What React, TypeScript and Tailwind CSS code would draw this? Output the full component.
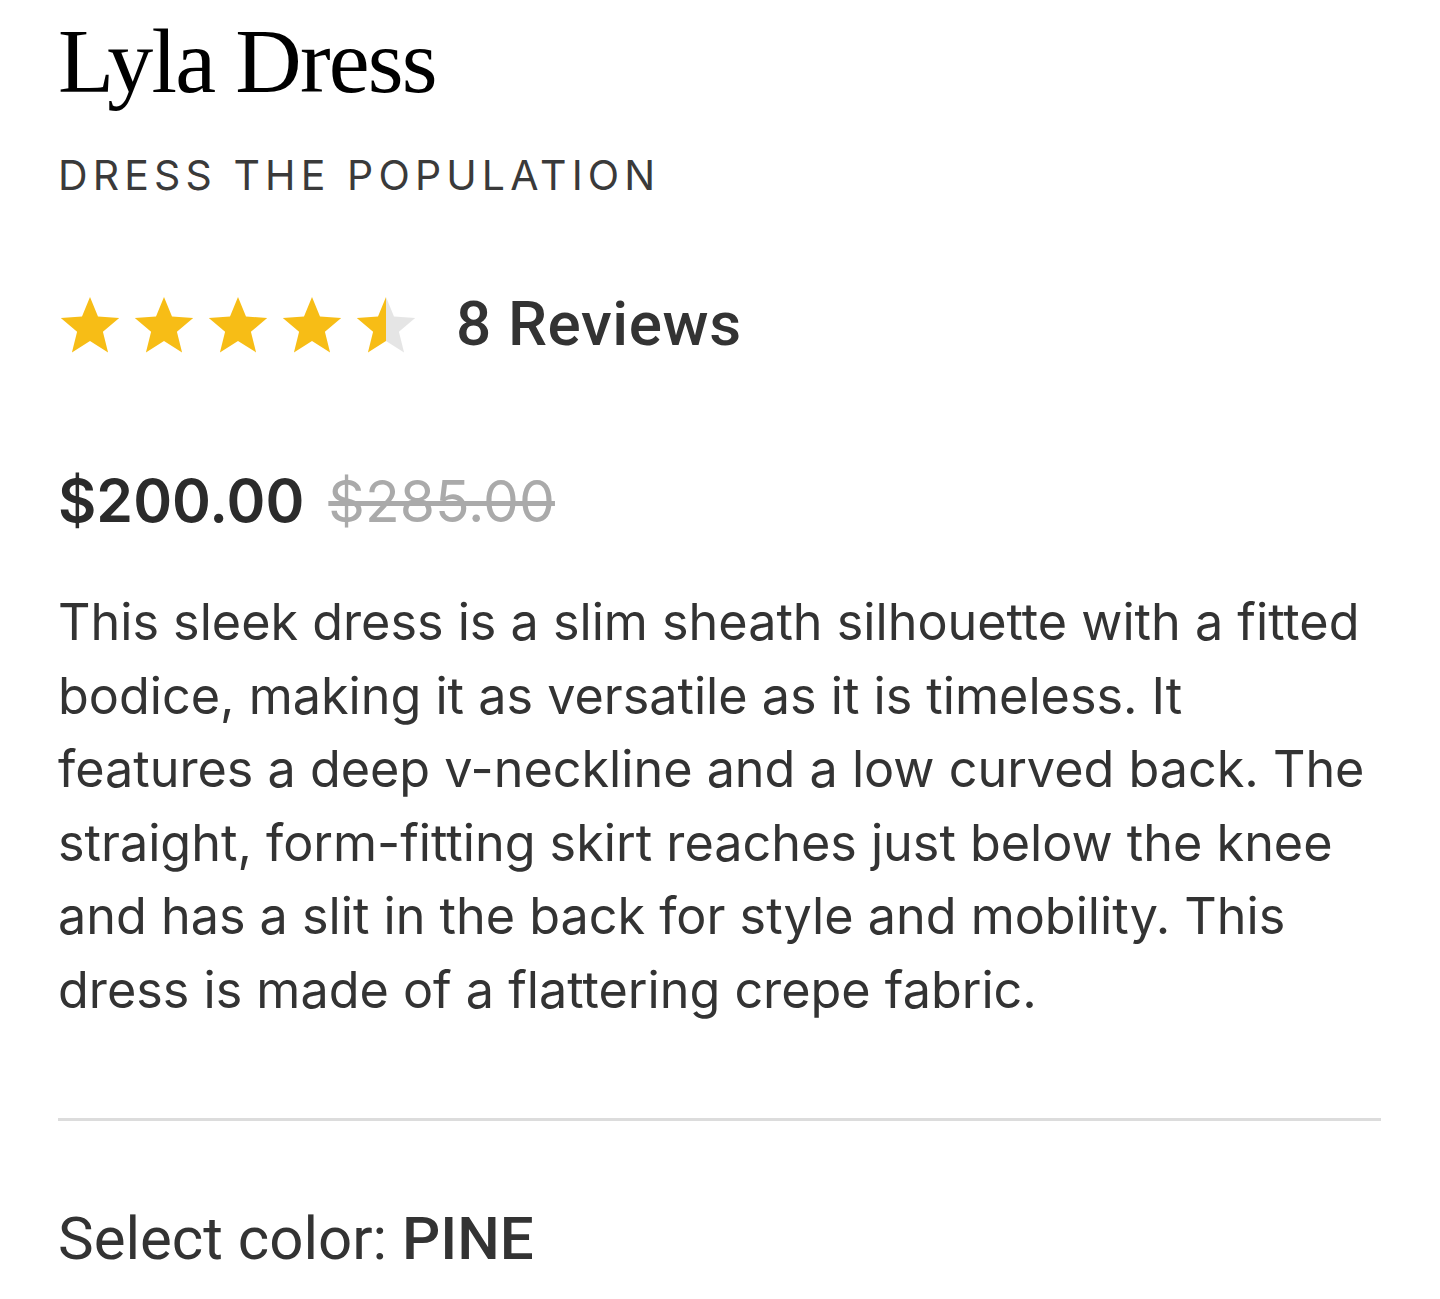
import React from 'react';

const Star: React.FC<{ fill: number }> = ({ fill }) => {
  const id = `half-${fill}`;
  return (
    <svg className="w-[64px] h-[62px]" viewBox="0 0 24 24">
      <defs>
        <linearGradient id={id} x1="0" x2="1" y1="0" y2="0">
          <stop offset={`${fill * 100}%`} stopColor="#f7bd16" />
          <stop offset={`${fill * 100}%`} stopColor="#e5e5e5" />
        </linearGradient>
      </defs>
      <path
        d="M12 1.5l3.1 7.6 8.2.6-6.3 5.3 2 8-7-4.4-7 4.4 2-8L.7 9.7l8.2-.6z"
        fill={`url(#${id})`}
      />
    </svg>
  );
};

const App: React.FC = () => {
  return (
    <div className="min-h-[1299px] bg-white pl-[58px] pr-[59px] pt-[6px] text-[#333]">
      <h1
        className="text-[92px] leading-[110px] tracking-[-0.02em] text-black"
        style={{ fontFamily: '"Liberation Serif", serif' }}
      >
        Lyla Dress
      </h1>

      <p
        className="mt-[34px] text-[41px] leading-[50px] tracking-[0.125em] text-[#3a3a3a]"
        style={{ fontFamily: 'Inter, sans-serif' }}
      >
        DRESS THE POPULATION
      </p>

      <div className="mt-[89px] flex items-center">
        <div className="flex gap-[10px]">
          <Star fill={1} />
          <Star fill={1} />
          <Star fill={1} />
          <Star fill={1} />
          <Star fill={0.5} />
        </div>
        <span
          className="ml-[38px] text-[62px] leading-[70px] font-medium tracking-[0.01em] text-[#333]"
          style={{ fontFamily: 'Roboto, sans-serif' }}
        >
          8 Reviews
        </span>
      </div>

      <div
        className="mt-[107px] flex items-baseline gap-[24px] leading-[70px]"
        style={{ fontFamily: 'Inter, sans-serif' }}
      >
        <span className="text-[59px] font-semibold text-[#2b2b2b]">$200.00</span>
        <span className="text-[57px] text-[#aaa] line-through">$285.00</span>
      </div>

      <p
        className="mt-[48px] text-[50.3px] leading-[73.5px] text-[#333]"
        style={{ fontFamily: 'Inter, sans-serif' }}
      >
        This sleek dress is a slim sheath silhouette with a fitted bodice, making it as versatile as it is timeless. It
        features a deep v-neckline and a low curved back. The straight, form-fitting skirt reaches just below the knee
        and has a slit in the back for style and mobility. This dress is made of a flattering crepe fabric.
      </p>

      <div className="mt-[92px] h-[3px] bg-[#dcdcdc]" />

      <p
        className="mt-[83px] text-[60px] leading-[70px] text-[#333]"
        style={{ fontFamily: 'Roboto, sans-serif' }}
      >
        Select color: <span className="font-medium">PINE</span>
      </p>
    </div>
  );
};

export default App;
